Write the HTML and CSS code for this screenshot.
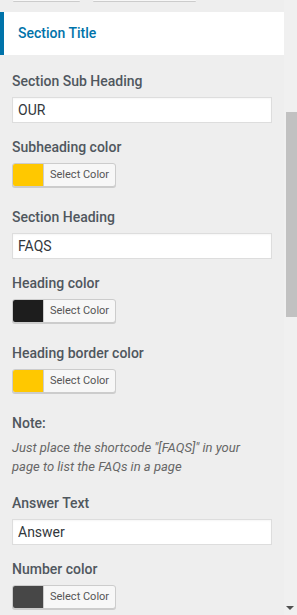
FILE: index.html
```html
<html>
    <head>
        <title>Section Settings</title>
        <link rel="stylesheet" href="styles.css">
    </head>
    <body>
        <div class="screen">
            <div class="panel">
                <div class="top-actions">
                    <div class="top-button first"></div>
                    <div class="top-button second"></div>
                </div>

                <div class="section-title">Section Title</div>

                <ul class="controls">
                    <li class="control">
                        <span class="control-title">Section Sub Heading</span>
                        <input class="text-input" type="text" value="OUR">
                    </li>
                    <li class="control">
                        <span class="control-title">Subheading color</span>
                        <div class="picker">
                            <span class="swatch" style="background-color: #ffc800;"></span>
                            <span class="picker-label">Select Color</span>
                        </div>
                    </li>
                    <li class="control">
                        <span class="control-title">Section Heading</span>
                        <input class="text-input" type="text" value="FAQS">
                    </li>
                    <li class="control">
                        <span class="control-title">Heading color</span>
                        <div class="picker">
                            <span class="swatch" style="background-color: #1d1d1d;"></span>
                            <span class="picker-label">Select Color</span>
                        </div>
                    </li>
                    <li class="control">
                        <span class="control-title">Heading border color</span>
                        <div class="picker">
                            <span class="swatch" style="background-color: #ffc800;"></span>
                            <span class="picker-label">Select Color</span>
                        </div>
                    </li>
                    <li class="control">
                        <span class="control-title">Note:</span>
                        <span class="description">Just place the shortcode "[FAQS]" in your page to list the FAQs in a page</span>
                    </li>
                    <li class="control">
                        <span class="control-title">Answer Text</span>
                        <input class="text-input" type="text" value="Answer">
                    </li>
                    <li class="control">
                        <span class="control-title">Number color</span>
                        <div class="picker">
                            <span class="swatch" style="background-color: #474747;"></span>
                            <span class="picker-label">Select Color</span>
                        </div>
                    </li>
                </ul>
            </div>

            <div class="scrollbar">
                <div class="thumb"></div>
                <div class="arrow"></div>
            </div>
        </div>
    </body>
</html>
```

FILE: styles.css
```css
body {
    margin: 0;
    font-family: Roboto, "Noto Sans", sans-serif;
    background-color: #eeeeee;
    color: #555d66;
}

.screen {
    display: flex;
    height: 615px;
    overflow: hidden;
}

.panel {
    flex: 1;
    background-color: #eeeeee;
}

.top-actions {
    display: flex;
    height: 2px;
    padding-left: 13px;
    gap: 13px;
}

.top-button {
    height: 1px;
    background-color: #f7f7f7;
    box-shadow: 0 1px 0 #cccccc;
    border-radius: 0 0 3px 3px;
}

.top-button.first {
    width: 67px;
}

.top-button.second {
    width: 103px;
}

.section-title {
    margin-top: 10px;
    height: 43px;
    line-height: 42px;
    background-color: #ffffff;
    border-left: 4px solid #0073aa;
    padding-left: 14px;
    color: #0073aa;
    font-size: 14px;
    font-weight: 500;
}

.controls {
    list-style: none;
    margin: 0;
    padding: 14px 12px 0 12px;
}

.control {
    display: flow-root;
    margin-bottom: 12px;
}

.control-title {
    display: block;
    font-size: 14px;
    line-height: 24px;
    font-weight: 500;
    color: #50575e;
    margin-bottom: 4px;
}

.text-input {
    display: block;
    box-sizing: border-box;
    width: 100%;
    height: 26px;
    margin: 0;
    padding: 0 5px;
    border: 1px solid #dddddd;
    background-color: #ffffff;
    font-family: Roboto, "Noto Sans", sans-serif;
    font-size: 14px;
    color: #32373c;
    box-shadow: inset 0 1px 2px rgba(0,0,0,0.04);
}

.picker {
    display: flex;
    box-sizing: border-box;
    width: 104px;
    height: 24px;
    margin-bottom: 6px;
    border: 1px solid #cccccc;
    border-radius: 3px;
    background-color: #f7f7f7;
    box-shadow: 0 1px 0 #cccccc;
    overflow: hidden;
}

.swatch {
    width: 30px;
    height: 100%;
    border-right: 1px solid #cccccc;
}

.picker-label {
    padding-left: 6px;
    font-size: 11px;
    line-height: 22px;
    color: #555555;
}

.description {
    display: block;
    font-size: 13px;
    line-height: 18.5px;
    font-style: italic;
    color: #666666;
    padding-right: 14px;
    margin-bottom: 3px;
}

.scrollbar {
    width: 13px;
    background-color: #f0f0f0;
    display: flex;
    flex-direction: column;
    align-items: flex-end;
}

.thumb {
    margin-top: 112px;
    width: 11px;
    height: 205px;
    background-color: #c1c1c1;
}

.arrow {
    margin-top: auto;
    margin-bottom: 5px;
    margin-right: 3px;
    width: 0;
    height: 0;
    border-left: 4px solid transparent;
    border-right: 4px solid transparent;
    border-top: 4px solid #505050;
}
```
